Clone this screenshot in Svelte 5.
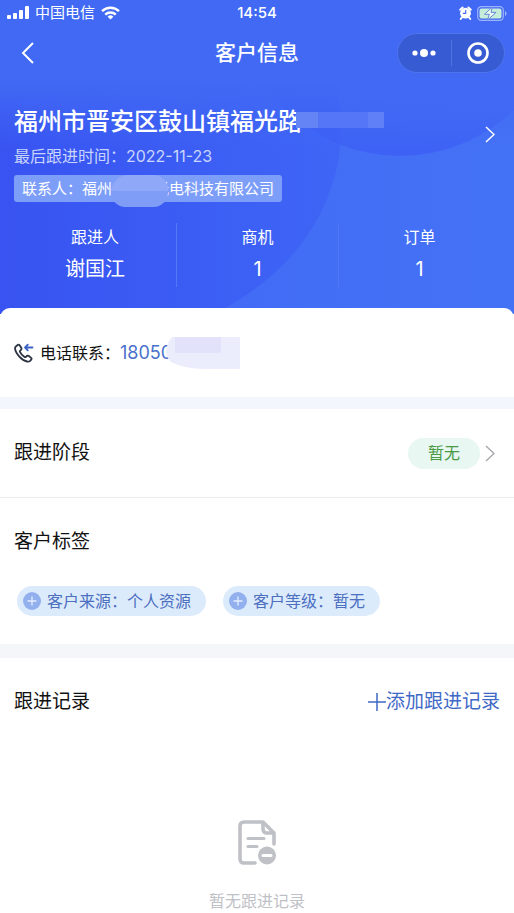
<script>
  let customer = {
    address: '福州市晋安区鼓山镇福光路',
    lastFollow: '2022-11-23',
    contactStart: '福州',
    contactEnd: '光电科技有限公司',
    phone: '18050'
  };

  let stats = [
    { label: '跟进人', value: '谢国江' },
    { label: '商机', value: '1' },
    { label: '订单', value: '1' }
  ];

  let tags = [
    { name: '客户来源', value: '个人资源' },
    { name: '客户等级', value: '暂无' }
  ];

  let stage = '暂无';
</script>

<div class="page">
  <header>
    <div class="status">
      <div class="carrier">
        <svg width="22" height="14" viewBox="0 0 22 14" fill="#fff">
          <rect x="0" y="9" width="4" height="4" rx="1" />
          <rect x="6" y="7" width="4" height="6" rx="1" />
          <rect x="12" y="4" width="4" height="9" rx="1" />
          <rect x="18" y="0" width="4" height="13" rx="1" />
        </svg>
        <span>中国电信</span>
        <svg width="19" height="14" viewBox="0 0 19 14" fill="none" stroke="#fff" stroke-width="2.4">
          <path d="M1 5.2a12.2 12.2 0 0 1 17 0" />
          <path d="M4.2 8.6a7.6 7.6 0 0 1 10.6 0" />
          <path d="M9.5 13.6 6.6 10.8a4.1 4.1 0 0 1 5.8 0z" fill="#fff" stroke="none" />
        </svg>
      </div>
      <time>14:54</time>
      <div class="power">
        <svg width="13" height="14" viewBox="0 0 13 14">
          <circle cx="6.5" cy="7.2" r="5.4" fill="#fff" />
          <path d="M1.2 3.8 3.6 1.5M11.8 3.8 9.4 1.5M2.9 11.4 1.7 13M10.1 11.4l1.2 1.6" stroke="#fff" stroke-width="1.9" stroke-linecap="round" />
          <path d="M6.7 4v3.4H3.9" fill="none" stroke="#4169f4" stroke-width="1.1" />
        </svg>
        <svg width="30" height="15" viewBox="0 0 30 15">
          <rect x=".7" y=".7" width="25.6" height="13.6" rx="3.6" fill="none" stroke="#9db3fa" stroke-width="1.2" />
          <rect x="2.5" y="2.5" width="22" height="10" rx="2" fill="#c5edd9" />
          <path d="M28 5v5q1.6-.8 1.6-2.5T28 5z" fill="#9db3fa" />
          <path d="M15.3 1 7.5 8.3h4.8L10.5 14l8.6-7.6h-5z" fill="#e9fbf2" stroke="#6788d6" stroke-width="1" />
        </svg>
      </div>
    </div>

    <nav>
      <button class="back" aria-label="返回">
        <svg width="13" height="22" viewBox="0 0 13 22" fill="none" stroke="#fff" stroke-width="2"><path d="M12 1 2 11l10 10" /></svg>
      </button>
      <h1>客户信息</h1>
      <div class="capsule">
        <button aria-label="更多">
          <svg width="26" height="10" viewBox="0 0 26 10" fill="#fff">
            <circle cx="4" cy="5" r="2.6" />
            <circle cx="13" cy="5" r="4" />
            <circle cx="22" cy="5" r="2.6" />
          </svg>
        </button>
        <button aria-label="关闭">
          <svg width="24" height="24" viewBox="0 0 24 24">
            <circle cx="12" cy="12" r="9.5" fill="none" stroke="#fff" stroke-width="2.6" />
            <circle cx="12" cy="12" r="3.8" fill="#fff" />
          </svg>
        </button>
      </div>
    </nav>
  </header>

  <section class="hero">
    <svg class="arcs" viewBox="0 0 514 235" preserveAspectRatio="none" aria-hidden="true">
      <defs>
        <linearGradient id="left" x1="0" x2="1" y1="0" y2="0">
          <stop offset="0" stop-color="#3853f1" />
          <stop offset="1" stop-color="#3e65f6" />
        </linearGradient>
        <linearGradient id="top" x1="0" x2="0" y1="0" y2="1">
          <stop offset=".78" stop-color="#3c5ff4" stop-opacity="0" />
          <stop offset="1" stop-color="#3c5ff4" stop-opacity=".9" />
        </linearGradient>
        <linearGradient id="fade" x1="0" x2="0" y1="0" y2="1">
          <stop offset="0" stop-color="#4169f4" />
          <stop offset="1" stop-color="#4169f4" stop-opacity="0" />
        </linearGradient>
      </defs>
      <path d="M0 0H335Q349 63 330 112 302 190 214 235H0z" fill="url(#left)" />
      <rect width="514" height="70" fill="url(#fade)" />
      <circle cx="400" cy="-87" r="164" fill="url(#top)" />
    </svg>

    <a class="summary" href="#detail">
      <div class="info">
        <h2>{customer.address}<span class="mask address-mask"></span></h2>
        <p class="last">最后跟进时间：{customer.lastFollow}</p>
        <p class="contact">联系人：{customer.contactStart}<span class="hidden-name"><span class="mask name-mask"></span></span>{customer.contactEnd}</p>
      </div>
      <svg width="10" height="17" viewBox="0 0 10 17" fill="none" stroke="#fff" stroke-width="1.5"><path d="M1 1l8 7.5L1 16" /></svg>
    </a>

    <dl class="stats">
      {#each stats as item}
        <div>
          <dt>{item.label}</dt>
          <dd>{item.value}</dd>
        </div>
      {/each}
    </dl>
  </section>

  <main>
    <section class="phone">
      <svg width="20" height="20" viewBox="0 0 20 20" fill="none" stroke-width="1.8" stroke-linejoin="round" stroke-linecap="round">
        <path d="M2.1 3.2 4 1.8q.8-.5 1.4.3l2 3q.5.8-.2 1.5L6 7.8q-.4.5-.1 1.1 1.6 3.2 4.6 5.1.7.4 1.2 0l1.4-1.2q.7-.5 1.4 0l2.7 2.1q.8.7.2 1.4l-1.3 1.5q-1 1-3 .7-4.100-.8-7.700-4.900Q1.400 9.200 1 5.400q0-1.400 1.100-2.200z" stroke="#2b3342" />
        <path d="M18.500 4.500H11M13.800 1.700 11 4.500l2.800 2.800" stroke="#3b62c4" />
      </svg>
      <span>电话联系：</span>
      <a href="tel:18050">{customer.phone}<svg class="phone-mask" width="75" height="32" viewBox="0 0 75 32"><path d="M7 0H75V32H38Q17 31 6 25-4 14 7 0z" fill="#ebedfc" /><path d="M10 0h46v16H10z" fill="#e3e2fb" /></svg></a>
    </section>

    <section class="row stage">
      <h3>跟进阶段</h3>
      <button class="stage-button">
        <span>{stage}</span>
        <svg width="10" height="17" viewBox="0 0 10 17" fill="none" stroke="#a6a8ab" stroke-width="1.4"><path d="M1 1l8 7.5L1 16" /></svg>
      </button>
    </section>

    <section class="tags">
      <h3>客户标签</h3>
      <div class="tag-list">
        {#each tags as tag}
          <button>
            <svg width="18" height="18" viewBox="0 0 18 18">
              <circle cx="9" cy="9" r="9" fill="#93b0ee" />
              <path d="M9 4.5v9M4.5 9h9" stroke="#e4eeff" stroke-width="1.3" />
            </svg>
            {tag.name}：{tag.value}
          </button>
        {/each}
      </div>
    </section>

    <section class="records">
      <div class="row">
        <h3>跟进记录</h3>
        <button class="add">
          <svg width="18" height="18" viewBox="0 0 18 18" stroke="#3f69c6" stroke-width="1.5"><path d="M9 0v18M0 9h18" /></svg>添加跟进记录
        </button>
      </div>
      <div class="empty">
        <svg width="40" height="46" viewBox="0 0 40 46" fill="none" stroke="#bfc1c7" stroke-width="3.6" stroke-linecap="round" stroke-linejoin="round">
          <path d="M18 43H7q-4 0-4-4V6q0-4 4-4h19l11 11v11" />
          <path d="M26 3v6q0 4 4 4h6" />
          <path d="M11 18.5h16M11 26.5h9" stroke-width="3" />
          <circle cx="30" cy="35.500" r="9" fill="#bfc1c7" stroke="none" />
          <path d="M26 35.500h8" stroke="#fff" stroke-width="3" />
        </svg>
        <p>暂无跟进记录</p>
      </div>
    </section>
  </main>
</div>

<style>
  :global(body) {
    background: #fff;
  }

  .page {
    font-family: Inter, "Noto Sans CJK SC", sans-serif;
    font-size: 16px;
    line-height: 24px;
    color: #111;
  }

  h1, h2, h3, p, dl, dd {
    margin: 0;
    font-weight: 400;
  }

  button {
    border: 0;
    padding: 0;
    background: none;
    font: inherit;
    color: inherit;
    display: flex;
    align-items: center;
    cursor: pointer;
  }

  a {
    text-decoration: none;
    color: inherit;
  }

  svg {
    flex: none;
    display: block;
  }

  header {
    background: #4169f4;
    color: #fff;
  }

  .status,
  nav {
    display: grid;
    grid-template-columns: minmax(0, 1fr) auto minmax(0, 1fr);
    align-items: center;
  }

  .status {
    height: 26px;
    padding: 0 7px;
    font-size: 15px;
  }

  .status time {
    font-weight: 500;
  }

  .carrier,
  .power {
    display: flex;
    align-items: center;
    gap: 6px;
  }

  .power {
    justify-content: flex-end;
    gap: 5px;
  }

  nav {
    height: 53px;
    padding: 0 9px;
  }

  .back {
    width: 36px;
    height: 40px;
    justify-content: center;
  }

  h1 {
    font-size: 21px;
    font-weight: 500;
  }

  .capsule {
    justify-self: end;
    display: flex;
    width: 106px;
    height: 38px;
    border: 1px solid #4f74ec;
    border-radius: 20px;
    background: #375bd3;
  }

  .capsule button {
    flex: 1;
    justify-content: center;
  }

  .capsule button + button {
    border-left: 1px solid #5273dc;
    margin: 6px 0;
  }

  .hero {
    position: relative;
    padding: 27px 14px;
    background: linear-gradient(to right, #4066f4, #4472f6);
    color: #fff;
  }

  .arcs {
    position: absolute;
    inset: 0;
    width: 100%;
    height: 100%;
  }

  .summary,
  .stats {
    position: relative;
  }

  .summary {
    display: flex;
    align-items: center;
    justify-content: space-between;
    padding-right: 5px;
  }

  .summary > svg {
    margin-bottom: 40px;
  }

  h2 {
    position: relative;
    font-size: 24px;
    font-weight: 500;
    line-height: 32px;
    white-space: nowrap;
  }

  .mask {
    position: absolute;
  }

  .address-mask {
    left: 282px;
    top: 6px;
    width: 88px;
    height: 16px;
    background: linear-gradient(to right, #6484f6 22px, #5577f7 22px, #5577f7 72px, #6080f8 72px);
  }

  .last {
    margin: 6px 0 7px;
    color: #c9d5fc;
  }

  .contact {
    display: inline-block;
    padding: 0 8px;
    height: 27px;
    line-height: 28px;
    border-radius: 3px;
    background: #7d9ef8;
    font-size: 15px;
  }

  .hidden-name {
    display: inline-block;
    position: relative;
    width: 42px;
    height: 27px;
    vertical-align: top;
  }

  .name-mask {
    left: -1px;
    top: 0;
    width: 57px;
    height: 32px;
    border-radius: 24px 20px 20px 20px;
    background: linear-gradient(#8fa9f8 16px, #7f9df7 16px);
  }

  .stats {
    display: grid;
    grid-template-columns: repeat(3, 1fr);
    margin-top: 21px;
    text-align: center;
  }

  .stats div {
    height: 64px;
  }

  .stats div + div {
    border-left: 1px solid #5277f7;
  }

  .stats dt {
    padding-top: 2px;
  }

  .stats dd {
    font-size: 20px;
    line-height: 28px;
    padding-top: 6px;
  }

  main {
    position: relative;
    margin-top: -6px;
    background: #fff;
    border-radius: 10px 10px 0 0;
  }

  .phone {
    display: flex;
    align-items: center;
    padding: 0 14px;
    height: 89px;
    border-bottom: 12px solid #f3f7fd;
  }

  .phone span {
    margin-left: 6px;
  }

  .phone a {
    position: relative;
    font-size: 18px;
    color: #4a70cc;
  }

  .phone-mask {
    position: absolute;
    left: 45px;
    top: -4px;
  }

  h3 {
    font-size: 19px;
    line-height: 28px;
  }

  .row {
    display: flex;
    align-items: center;
    justify-content: space-between;
    padding: 0 14px;
    height: 88px;
  }

  .stage {
    padding-right: 19px;
    border-bottom: 1px solid #ebebee;
  }

  .stage-button {
    gap: 5px;
  }

  .stage-button span {
    padding: 0 20px;
    line-height: 31px;
    border-radius: 16px;
    background: #e8f7f1;
    color: #4a9a45;
  }

  .tags {
    padding: 30px 17px 28px 14px;
    border-bottom: 14px solid #f5f6f9;
  }

  .tag-list {
    display: flex;
    flex-wrap: wrap;
    gap: 17px;
    padding: 30px 0 0 3px;
  }

  .tag-list button {
    gap: 6px;
    padding: 0 15px 0 6px;
    height: 30px;
    border-radius: 15px;
    background: #dcebfc;
    color: #4c6fc0;
  }

  .add {
    font-size: 19px;
    color: #3f69c6;
  }

  .empty {
    display: flex;
    flex-direction: column;
    align-items: center;
    padding-top: 74px;
    color: #bfc1c7;
  }

  .empty p {
    margin-top: 23px;
  }
</style>
